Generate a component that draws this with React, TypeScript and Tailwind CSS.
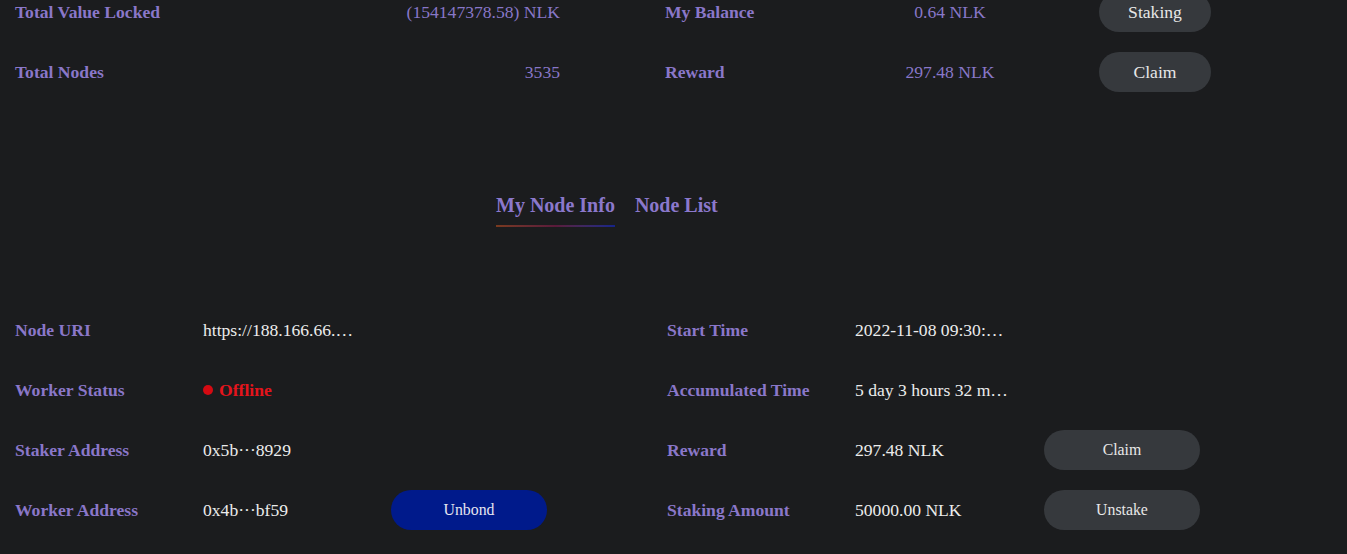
import { ReactNode } from 'react';

function PillButton({ children, tone = 'gray', size = 'sm' }: { children: ReactNode; tone?: 'gray' | 'blue'; size?: 'sm' | 'lg' }) {
  const toneClass = tone === 'blue' ? 'bg-[#001a8b] text-[#e6e6f0]' : 'bg-[#36393d] text-[#e8e8e8]';
  const sizeClass = size === 'lg' ? 'w-[112px] text-[17.6px]' : 'w-[156px] text-[15.8px]';
  return (
    <button className={`h-10 rounded-full flex items-center justify-center ${toneClass} ${sizeClass}`}>
      {children}
    </button>
  );
}

const summaryLeft = [
  { label: 'Total Value Locked', value: '(154147378.58) NLK' },
  { label: 'Total Nodes', value: '3535' },
];

const summaryRight = [
  { label: 'My Balance', value: '0.64 NLK', action: 'Staking' },
  { label: 'Reward', value: '297.48 NLK', action: 'Claim' },
];

export default function App() {
  return (
    <div className="min-h-[554px] bg-[#1b1c1e] text-[17.6px] overflow-hidden font-['Liberation_Serif','Times_New_Roman',serif]">
      {/* Summary */}
      <div className="-mt-[18px] flex pl-[15px]">
        <div className="w-[650px]">
          {summaryLeft.map((row) => (
            <div key={row.label} className="h-[60px] flex items-center">
              <span className="w-[170px] font-bold text-[#8a77c9]">{row.label}</span>
              <span className="w-[375px] text-right text-[#8877c8]">{row.value}</span>
            </div>
          ))}
        </div>
        <div>
          {summaryRight.map((row) => (
            <div key={row.label} className="h-[60px] flex items-center">
              <span className="w-[170px] font-bold text-[#8a77c9]">{row.label}</span>
              <span className="w-[230px] text-center text-[#8877c8]">{row.value}</span>
              <div className="ml-[34px]">
                <PillButton size="lg">{row.action}</PillButton>
              </div>
            </div>
          ))}
        </div>
      </div>

      {/* Tabs */}
      <div className="mt-[89px] pl-[496px] flex gap-5 text-[20px] font-bold">
        <div className="flex flex-col">
          <span className="text-[#8b78cc] leading-[28px]">My Node Info</span>
          <div className="mt-[6px] h-[2px] bg-gradient-to-r from-[#7a3a1e] via-[#5a1a3a] to-[#14238a]" />
        </div>
        <span className="text-[#8b78cc] leading-[28px]">Node List</span>
      </div>

      {/* Node info */}
      <div className="mt-[73px] flex pl-[15px]">
        <div className="w-[652px]">
          <div className="h-[60px] flex items-center">
            <span className="w-[188px] font-bold text-[#8a77c9]">Node URI</span>
            <span className="w-[188px] text-[#ececec]">https://188.166.66.…</span>
          </div>
          <div className="h-[60px] flex items-center">
            <span className="w-[188px] font-bold text-[#8a77c9]">Worker Status</span>
            <span className="flex items-center gap-[6px] font-bold text-[#e5141c]">
              <span className="w-[10px] h-[10px] rounded-full bg-[#d50a12]" />
              Offline
            </span>
          </div>
          <div className="h-[60px] flex items-center">
            <span className="w-[188px] font-bold text-[#8a77c9]">Staker Address</span>
            <span className="w-[188px] text-[#ececec]">0x5b···8929</span>
          </div>
          <div className="h-[60px] flex items-center">
            <span className="w-[188px] font-bold text-[#8a77c9]">Worker Address</span>
            <span className="w-[188px] text-[#ececec]">0x4b···bf59</span>
            <PillButton tone="blue">Unbond</PillButton>
          </div>
        </div>
        <div>
          <div className="h-[60px] flex items-center">
            <span className="w-[188px] font-bold text-[#8a77c9]">Start Time</span>
            <span className="w-[189px] text-[#ececec]">2022-11-08 09:30:…</span>
          </div>
          <div className="h-[60px] flex items-center">
            <span className="w-[188px] font-bold text-[#8a77c9]">Accumulated Time</span>
            <span className="w-[189px] text-[#ececec]">5 day 3 hours 32 m…</span>
          </div>
          <div className="h-[60px] flex items-center">
            <span className="w-[188px] font-bold text-[#8a77c9]">Reward</span>
            <span className="w-[189px] text-[#ececec]">297.48 NLK</span>
            <PillButton>Claim</PillButton>
          </div>
          <div className="h-[60px] flex items-center">
            <span className="w-[188px] font-bold text-[#8a77c9]">Staking Amount</span>
            <span className="w-[189px] text-[#ececec]">50000.00 NLK</span>
            <PillButton>Unstake</PillButton>
          </div>
        </div>
      </div>
    </div>
  );
}
